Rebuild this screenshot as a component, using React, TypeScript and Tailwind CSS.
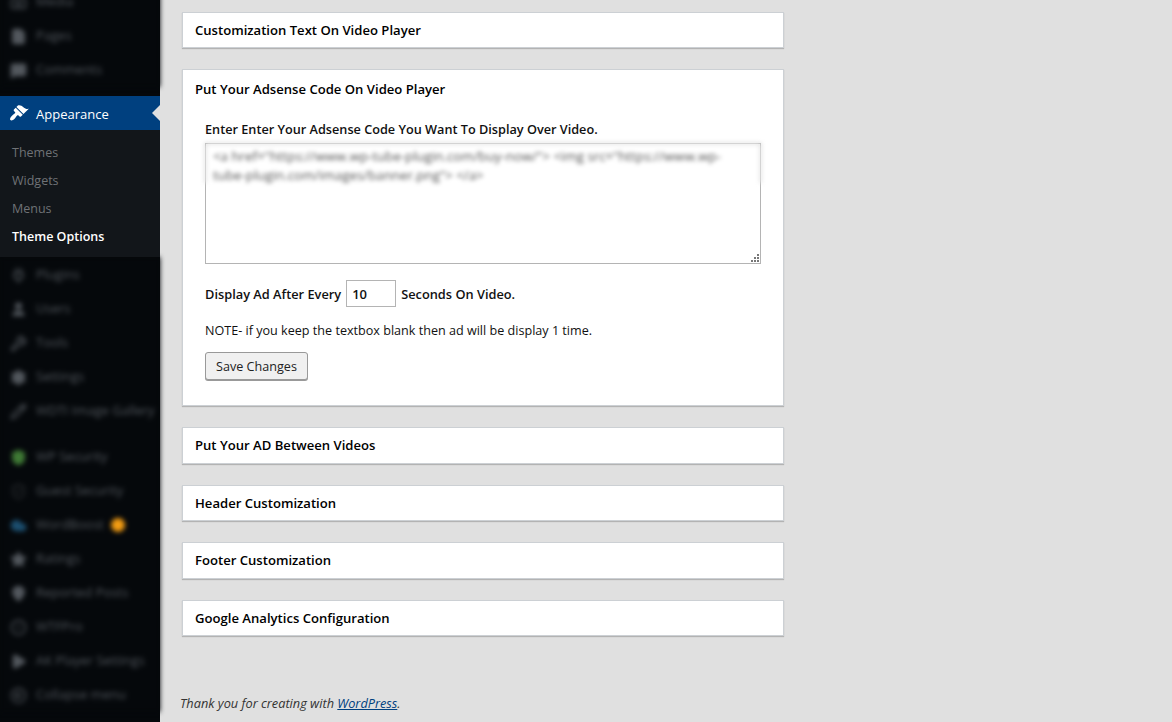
import { ReactNode } from 'react'
import { Camera, File, MessageSquare, Plug, User, Wrench, Settings, Pencil, Shield, ShieldCheck, Cloud, Star, MapPin, CircleDot, Play, CircleArrowLeft } from 'lucide-react'

const font = "font-['Open_Sans','Noto_Sans',sans-serif]"

function BlurItem({ icon, label, badge }: { icon: ReactNode; label: string; badge?: boolean }) {
  return (
    <div className="flex h-[34px] items-center pl-[10px] text-[13px] text-[#53585e]">
      <span className="flex w-[26px] shrink-0">{icon}</span>
      <span className="whitespace-nowrap">{label}</span>
      {badge && <span className="ml-[7px] h-[14px] w-[14px] rounded-full bg-[#f39c12]" />}
    </div>
  )
}

function Panel({ title }: { title: string }) {
  return (
    <div className="flex h-[36.5px] w-[602px] items-center border border-[#ccd0d4] bg-white pl-3 pt-[2px] shadow-[0_1px_1px_rgba(0,0,0,0.2)]">
      <h3 className="text-[13.1px] font-semibold text-black">{title}</h3>
    </div>
  )
}

export default function App() {
  const ic = 'h-[17px] w-[17px] text-[#53585e]'
  return (
    <div className={`flex h-[722px] overflow-hidden bg-[#e0e0e0] ${font}`}>
      <aside className="w-[160px] shrink-0 bg-[#05080b]">
        <div className="mt-[-16px] bg-[#05080b] pt-[1px] blur-[2.5px]">
          <BlurItem icon={<Camera className={ic} />} label="Media" />
          <BlurItem icon={<File className={ic} fill="currentColor" />} label="Pages" />
          <BlurItem icon={<MessageSquare className={ic} fill="currentColor" />} label="Comments" />
        </div>
        <div className="relative z-10 mt-[9px] flex h-[34px] items-center bg-[#00407f] pl-[9px] text-[13px] text-white">
          <svg viewBox="0 0 20 20" className="mr-[7px] h-[20px] w-[20px]" fill="currentColor">
            <path d="M14.48 11.06L7.41 3.99l1.5-1.5c.5-.56 2.3-.47 3.51.32 1.21.8 1.43 1.28 2.91 2.1 1.18.64 2.45 1.26 4.45.85zm-.71.71L6.7 4.7 4.93 6.47c-.39.39-.39 1.02 0 1.41l1.06 1.06c.39.39.39 1.03 0 1.42-.6.6-1.43 1.11-2.21 1.69-.35.26-.7.53-1.01.84C1.43 14.23.4 16.08 1.4 17.07c.99 1 2.84-.03 4.18-1.36.31-.31.58-.66.85-1.02.57-.78 1.08-1.61 1.69-2.21.39-.39 1.02-.39 1.41 0l1.06 1.06c.39.39 1.02.39 1.41 0z" />
          </svg>
          <span className="pt-[3px]">Appearance</span>
          <span className="ml-auto h-0 w-0 border-y-[8px] border-r-[8px] border-y-transparent border-r-[#e0e0e0]" />
        </div>
        <div className="relative z-10 flex h-[127px] flex-col justify-center bg-[#12161a] pl-3 pt-[2px] text-[12.5px] leading-[28px] text-[#6f7276]">
          <div>Themes</div>
          <div>Widgets</div>
          <div>Menus</div>
          <div className="font-semibold text-white">Theme Options</div>
        </div>
        <div className="bg-[#05080b] pt-[1px] blur-[2.5px]">
          <BlurItem icon={<Plug className={ic} />} label="Plugins" />
          <BlurItem icon={<User className={ic} fill="currentColor" />} label="Users" />
          <BlurItem icon={<Wrench className={ic} />} label="Tools" />
          <BlurItem icon={<Settings className={ic} fill="currentColor" />} label="Settings" />
          <BlurItem icon={<Pencil className={ic} />} label="WDTI Image Gallery" />
          <div className="h-[12px]" />
          <BlurItem icon={<Shield className="h-[17px] w-[17px] text-[#3f7a35]" fill="currentColor" />} label="WP Security" />
          <BlurItem icon={<ShieldCheck className="h-[17px] w-[17px] text-[#2a2d30]" />} label="Guest Security" />
          <BlurItem icon={<Cloud className="h-[17px] w-[17px] text-[#1c4f70]" fill="currentColor" />} label="WordBoost" badge />
          <BlurItem icon={<Star className={ic} fill="currentColor" />} label="Ratings" />
          <BlurItem icon={<MapPin className={ic} fill="currentColor" />} label="Reported Posts" />
          <BlurItem icon={<CircleDot className={ic} />} label="WTFPro" />
          <BlurItem icon={<Play className={ic} fill="currentColor" />} label="AK Player Settings" />
          <BlurItem icon={<CircleArrowLeft className={ic} />} label="Collapse menu" />
        </div>
      </aside>

      <main className="flex flex-1 flex-col pl-[22px] pt-[11.5px]">
        <div className="flex flex-col gap-[21px]">
          <Panel title="Customization Text On Video Player" />
          <div className="h-[337px] w-[602px] border border-[#ccd0d4] bg-white pl-3 pt-[10px] shadow-[0_1px_1px_rgba(0,0,0,0.2)]">
            <h3 className="text-[13.1px] font-semibold leading-[18px] text-black">Put Your Adsense Code On Video Player</h3>
            <div className="pl-[10px] pt-[22px]">
              <p className="text-[12.7px] font-semibold leading-[18px] text-[#111]">Enter Enter Your Adsense Code You Want To Display Over Video.</p>
              <div className="relative mt-[5px] h-[121px] w-[556px] border border-[#b4b4b4] bg-white">
                <div className="absolute -left-px -right-px -top-px h-[40px] border-x border-t border-[#b4b4b4] bg-white blur-[2px]">
                  <div className="whitespace-nowrap pl-[7px] pt-[3px] text-[13.3px] leading-[19px] text-[#555]">
                    {'<a href="https://www.wp-tube-plugin.com/buy-now/"> <img src="https://www.wp-'}
                    <br />
                    {'tube-plugin.com/images/banner.png"> </a>'}
                  </div>
                </div>
                <svg viewBox="0 0 9 9" className="absolute bottom-0 right-0 h-[9px] w-[9px]" fill="#777">
                  <rect x="6" y="0" width="2" height="2" />
                  <rect x="3" y="3" width="2" height="2" />
                  <rect x="6" y="3" width="2" height="2" />
                  <rect x="0" y="6" width="2" height="2" />
                  <rect x="3" y="6" width="2" height="2" />
                  <rect x="6" y="6" width="2" height="2" />
                </svg>
              </div>
              <div className="mt-[16px] flex h-[28px] items-center text-[12.8px] font-semibold text-[#111]">
                <span className="pt-[1px]">Display Ad After Every</span>
                <input
                  readOnly
                  value="10"
                  className="mx-[5px] mb-[1px] h-[27px] w-[50px] border border-[#b4b4b4] bg-white pl-[5px] text-[13px] font-semibold text-[#111] outline-none"
                />
                <span className="pt-[1px]">Seconds On Video.</span>
              </div>
              <p className="mt-[14px] text-[12.6px] font-normal leading-[18px] text-[#111]">NOTE- if you keep the textbox blank then ad will be display 1 time.</p>
              <button className="mt-[12px] h-[28px] w-[103px] rounded-[3px] border border-[#999] bg-[#f0f0f0] pt-[2px] text-[12.6px] text-[#222] shadow-[0_1px_0_#999]">
                Save Changes
              </button>
            </div>
          </div>
          <Panel title="Put Your AD Between Videos" />
          <Panel title="Header Customization" />
          <Panel title="Footer Customization" />
          <Panel title="Google Analytics Configuration" />
        </div>
        <p className="ml-[-2px] mt-[58px] text-[12.75px] italic text-[#333]">
          Thank you for creating with <a className="text-[#00407f] underline">WordPress</a>.
        </p>
      </main>
    </div>
  )
}
